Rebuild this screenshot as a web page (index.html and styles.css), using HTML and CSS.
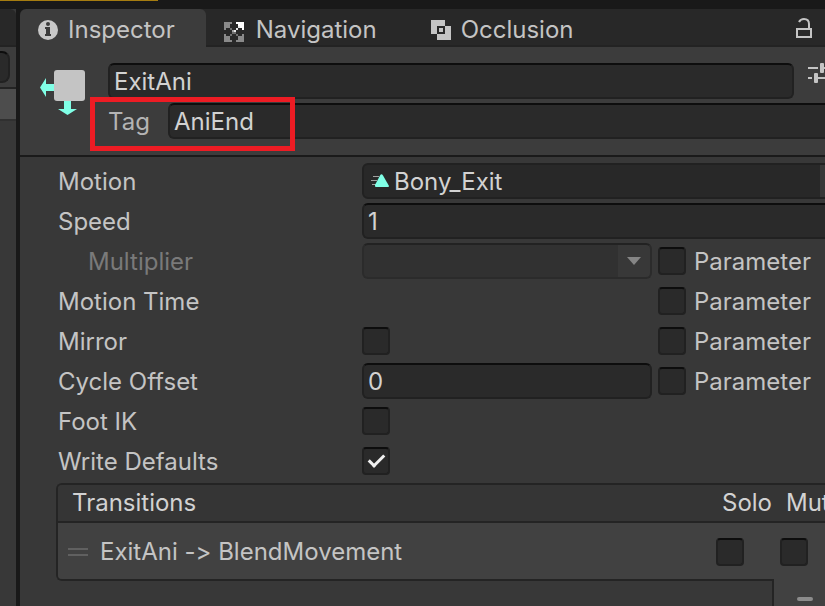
FILE: index.html
```html
<!DOCTYPE html>
<html lang="en">
<head>
    <meta charset="UTF-8">
    <meta name="viewport" content="width=device-width, initial-scale=1.0">
    <title>Inspector</title>
    <link rel="stylesheet" href="styles.css">
</head>
<body>
    <div class="toolbar"><div class="toolbar-accent"></div></div>

    <div class="workspace">
        <div class="side">
            <div class="side-tabs"></div>
            <div class="side-search"><div class="side-field"></div></div>
            <div class="side-item"></div>
        </div>

        <main class="inspector">
            <nav class="tabs">
                <button class="tab active">
                    <svg width="20" height="20" viewBox="0 0 20 20">
                        <circle cx="10" cy="10" r="10" fill="#c8c8c8"/>
                        <circle cx="10" cy="4" r="2" fill="#3c3c3c"/>
                        <path d="M7 7h5v7h1v2H7v-2h1V9H7z" fill="#3c3c3c"/>
                    </svg>
                    Inspector
                </button>
                <button class="tab">
                    <svg width="20" height="24" viewBox="0 -4 20 24" shape-rendering="crispEdges">
                        <path d="M0 0h8v2H6v2H4v2H2v2H0zM0 12h2v2h2v2h2v2h2v2H0zM20 12v8h-8v-2h2v-2h2v-2h2v-2z" fill="#8a8a8a"/>
                        <path d="M4 4h2v2H4zM14 14h2v2h-2zM4 14h2v2H4z" fill="#8a8a8a"/>
                        <path d="M6 6h2v2H6zM6 12h2v2H6zM12 12h2v2h-2zM8 10h4v2H8z" fill="#6e6e6e"/>
                        <path d="M8 8h2v2H8z" fill="#a0a0a0"/>
                        <path d="M12 0h8v8h-2V6h-2V4h-2V2h-2z" fill="#fff"/>
                        <path d="M14 4h2v2h-2zM12 6h2v2h-2zM10 8h2v2h-2z" fill="#e6e6e6"/>
                    </svg>
                    Navigation
                </button>
                <button class="tab">
                    <svg width="20" height="20" viewBox="0 0 20 20" shape-rendering="crispEdges">
                        <path d="M0 0h14v6h6v14H6v-6H0z" fill="#c4c4c4"/>
                        <path d="M6 6h8v8H6z" fill="#282828"/>
                        <path d="M8 8h4v4H8z" fill="#c4c4c4"/>
                    </svg>
                    Occlusion
                </button>
                <button class="lock" aria-label="Lock">
                    <svg width="16" height="20" viewBox="0 0 16 20" fill="none" stroke="#c4c4c4" stroke-width="2">
                        <rect x="1" y="11" width="14" height="8"/>
                        <path d="M3 4C4 2 6 1 8 1c3 0 5 2 5 5v5"/>
                    </svg>
                </button>
            </nav>

            <header class="header">
                <svg class="state-icon" width="46" height="46" viewBox="0 0 46 46">
                    <path d="M0 17.500L6 8v6h9v7H6v6z" fill="#80ffe6"/>
                    <path d="M24 30h7v9h6l-9.500 6L18 39h6z" fill="#80ffe6"/>
                    <rect x="14" y="0" width="31" height="31" rx="3" fill="#c4c4c4"/>
                </svg>
                <div class="header-fields">
                    <div class="name-row">
                        <input class="field" type="text" value="ExitAni" aria-label="Name">
                        <button class="preset" aria-label="Presets">
                            <svg width="33" height="20" viewBox="0 0 33 20" fill="#c4c4c4">
                                <path d="M0 4h10v2H0zM16 4h6v2h-6zM0 14h4v2H0zM10 14h12v2H10z"/>
                                <rect x="12" y="0" width="4" height="10" rx="1"/>
                                <rect x="6" y="10" width="4" height="10" rx="1"/>
                            </svg>
                        </button>
                    </div>
                    <div class="tag-row">
                        <label for="tag">Tag</label>
                        <input class="field" type="text" id="tag" value="AniEnd">
                        <div class="highlight"></div>
                    </div>
                </div>
            </header>

            <section class="properties">
                <div class="row wide">
                    <label for="motion">Motion</label>
                    <div class="object-field">
                        <svg width="20" height="16" viewBox="0 0 20 16">
                            <path d="M3 3.500h6M1 7.500h6M2 11.500h4" stroke="#a0a0a0"/>
                            <path d="M10 2.500Q11.500 0 13 2.500L19 13q0 1-1 1H6q-1.500 0-1-2z" fill="#80ffe6"/>
                        </svg>
                        <input type="text" id="motion" value="Bony_Exit" readonly>
                        <button class="picker" aria-label="Select motion"></button>
                    </div>
                </div>
                <div class="row wide">
                    <label for="speed">Speed</label>
                    <input class="field" type="text" id="speed" value="1">
                </div>
                <div class="row">
                    <label class="sub" for="multiplier">Multiplier</label>
                    <div class="dropdown">
                        <select id="multiplier" disabled><option></option></select>
                        <svg class="arrow" width="14" height="8" viewBox="0 0 14 8"><path d="M0 0h14L7 8z" fill="#858585"/></svg>
                    </div>
                    <label class="param"><input type="checkbox">Parameter</label>
                </div>
                <div class="row">
                    <span>Motion Time</span>
                    <span></span>
                    <label class="param"><input type="checkbox">Parameter</label>
                </div>
                <div class="row">
                    <label for="mirror">Mirror</label>
                    <input type="checkbox" id="mirror">
                    <label class="param"><input type="checkbox">Parameter</label>
                </div>
                <div class="row">
                    <label for="offset">Cycle Offset</label>
                    <input class="field" type="text" id="offset" value="0">
                    <label class="param"><input type="checkbox">Parameter</label>
                </div>
                <div class="row">
                    <label for="footik">Foot IK</label>
                    <input type="checkbox" id="footik">
                </div>
                <div class="row">
                    <label for="defaults">Write Defaults</label>
                    <input type="checkbox" id="defaults" checked>
                </div>
            </section>

            <section class="transitions">
                <div class="list">
                    <table>
                        <thead>
                            <tr>
                                <th>Transitions</th>
                                <th class="toggle">Solo</th>
                                <th class="toggle last">Mute</th>
                            </tr>
                        </thead>
                        <tbody>
                            <tr>
                                <td><div class="transition"><span class="handle"></span>ExitAni -&gt; BlendMovement</div></td>
                                <td class="toggle"><input type="checkbox" aria-label="Solo"></td>
                                <td class="toggle last"><input type="checkbox" aria-label="Mute"></td>
                            </tr>
                        </tbody>
                    </table>
                </div>
                <div class="list-footer">
                    <button class="remove" aria-label="Remove transition"><span></span></button>
                </div>
            </section>
        </main>
    </div>
</body>
</html>
```
FILE: styles.css
```css
* {
    box-sizing: border-box;
}
body {
    margin: 0;
    min-height: 100vh;
    display: flex;
    flex-direction: column;
    overflow: hidden;
    background: #191919;
    color: #c4c4c4;
    font-family: Inter, sans-serif;
    font-size: 24px;
    font-feature-settings: "calt" 0;
    line-height: 38px;
}
button, input, select {
    margin: 0;
    padding: 0;
    border: 0;
    background: none;
    color: inherit;
    font: inherit;
}
svg {
    display: block;
    flex: none;
}
.toolbar {
    height: 9px;
}
.toolbar-accent {
    width: 158px;
    height: 1px;
    background: #a57c10;
}
.workspace {
    flex: 1;
    display: flex;
    gap: 4px;
}

/* edge of the neighbouring panel */
.side {
    flex: none;
    width: 16px;
    background: #383838;
}
.side-tabs {
    height: 38px;
    background: #282828;
    border-bottom: 2px solid #232323;
    border-top-right-radius: 6px;
}
.side-search {
    height: 42px;
    padding-top: 4px;
    background: #3c3c3c;
    border-bottom: 2px solid #232323;
}
.side-field {
    width: 10px;
    height: 32px;
    background: #2a2a2a;
    border: 2px solid #212121;
    border-top-color: #0d0d0d;
    border-left: 0;
    border-radius: 0 8px 8px 0;
}
.side-item {
    height: 32px;
    background: #4d4d4d;
    border-bottom: 2px solid #303030;
}

/* the panel runs a little past the right edge of the window */
.inspector {
    flex: 1;
    min-width: 0;
    margin-right: -16px;
    background: #383838;
    border-top-left-radius: 6px;
    overflow: hidden;
}
.tabs {
    display: flex;
    height: 38px;
    background: #282828;
    box-shadow: inset 0 -2px #232323;
}
.tab {
    display: flex;
    align-items: center;
    gap: 12px;
    padding: 3px 36px 0 18px;
    white-space: nowrap;
}
.tab.active {
    gap: 10px;
    padding-right: 31px;
    background: #3c3c3c;
    border-radius: 6px 6px 0 0;
}
.tab + .tab + .tab {
    gap: 10px;
}
.lock {
    margin-left: auto;
    padding-right: 29px;
}
.header {
    display: flex;
    gap: 22px;
    padding: 16px 0 16px 20px;
    background: #3c3c3c;
    border-bottom: 2px solid #1a1a1a;
}
.state-icon {
    margin-top: 7px;
}
.header-fields {
    flex: 1;
    min-width: 0;
    display: flex;
    flex-direction: column;
    gap: 4px;
}
.name-row {
    display: flex;
    align-items: flex-start;
    gap: 14px;
}
.tag-row {
    position: relative;
    display: flex;
    gap: 18px;
    height: 36px;
}
.tag-row label {
    width: 42px;
    color: #b4b4b4;
    text-align: right;
}
.highlight {
    position: absolute;
    left: -18px;
    top: -6px;
    width: 205px;
    height: 54px;
    border: 5px solid #ed1c24;
}
.field {
    flex: 1;
    min-width: 0;
    width: 100%;
    height: 36px;
    padding: 0 4px;
    background: #2a2a2a;
    border: 2px solid #212121;
    border-top-color: #0d0d0d;
    border-radius: 6px;
    color: #d2d2d2;
    line-height: 32px;
}

.properties {
    display: flex;
    flex-direction: column;
    gap: 4px;
    padding: 6px 0 4px 38px;
}
.row {
    display: grid;
    grid-template-columns: 304px 1fr 189px;
    height: 36px;
}
.row.wide {
    grid-template-columns: 304px 1fr;
}
.sub {
    padding-left: 30px;
    color: #7a7a7a;
}
.object-field {
    display: flex;
    align-items: center;
    min-width: 0;
    height: 36px;
    padding-left: 6px;
    background: #282828;
    border: 2px solid #212121;
    border-radius: 6px;
    color: #d2d2d2;
}
.object-field input {
    flex: 1;
    min-width: 0;
    height: 32px;
    padding: 2px 0 0 4px;
}
.picker {
    width: 19px;
    height: 32px;
    background: #373737;
}
.dropdown {
    position: relative;
}
.dropdown select {
    appearance: none;
    display: block;
    width: 100%;
    height: 36px;
    background: linear-gradient(to left, #383838 32px, #313131 32px);
    border: 2px solid #2b2b2b;
    border-top-color: #222;
    border-radius: 6px;
    opacity: 1;
}
.arrow {
    position: absolute;
    right: 11px;
    top: 14px;
}
.param {
    display: flex;
    gap: 8px;
    padding-left: 6px;
}
input[type="checkbox"] {
    appearance: none;
    flex: none;
    width: 28px;
    height: 28px;
    margin-top: 4px;
    background: #2a2a2a;
    border: 2px solid #212121;
    border-top-color: #0d0d0d;
    border-radius: 4px;
}
input[type="checkbox"]:checked::after {
    content: "";
    display: block;
    box-sizing: border-box;
    width: 9px;
    height: 16px;
    margin: 2px 0 0 8px;
    border: solid #f0f0f0;
    border-width: 0 3px 3px 0;
    transform: rotate(45deg);
}

.transitions {
    margin-left: 36px;
}
.list {
    border: 2px solid #242424;
    border-right: 0;
    border-radius: 6px 0 0 6px;
    overflow: hidden;
}
table {
    width: 100%;
    border-collapse: separate;
    border-spacing: 0;
    table-layout: fixed;
}
th {
    height: 38px;
    padding: 0 0 0 14px;
    background: #353535;
    border-bottom: 2px solid #242424;
    color: #d2d2d2;
    font-weight: 400;
    line-height: 36px;
    text-align: left;
}
td {
    height: 56px;
    padding: 2px 0 0 10px;
    background: #414141;
}
th.toggle {
    width: 64px;
    padding-left: 6px;
}
th.last {
    width: 61px;
}
td.toggle {
    padding: 2px 0 0;
}
.toggle input[type="checkbox"] {
    display: block;
    margin: 0;
}
.transition {
    display: flex;
    align-items: center;
    gap: 12px;
}
.handle {
    width: 20px;
    height: 8px;
    border: solid #606060;
    border-width: 2px 0;
}

/* the remove button hangs from the bottom edge of the list */
.list-footer {
    display: flex;
    justify-content: flex-end;
    height: 40px;
    margin-top: -2px;
}
.remove {
    width: 69px;
    padding-left: 23px;
    background: #414141;
    border-left: 2px solid #242424;
}
.remove span {
    display: block;
    width: 16px;
    height: 4px;
    border-radius: 2px;
    background: #8c8c8c;
}
```
